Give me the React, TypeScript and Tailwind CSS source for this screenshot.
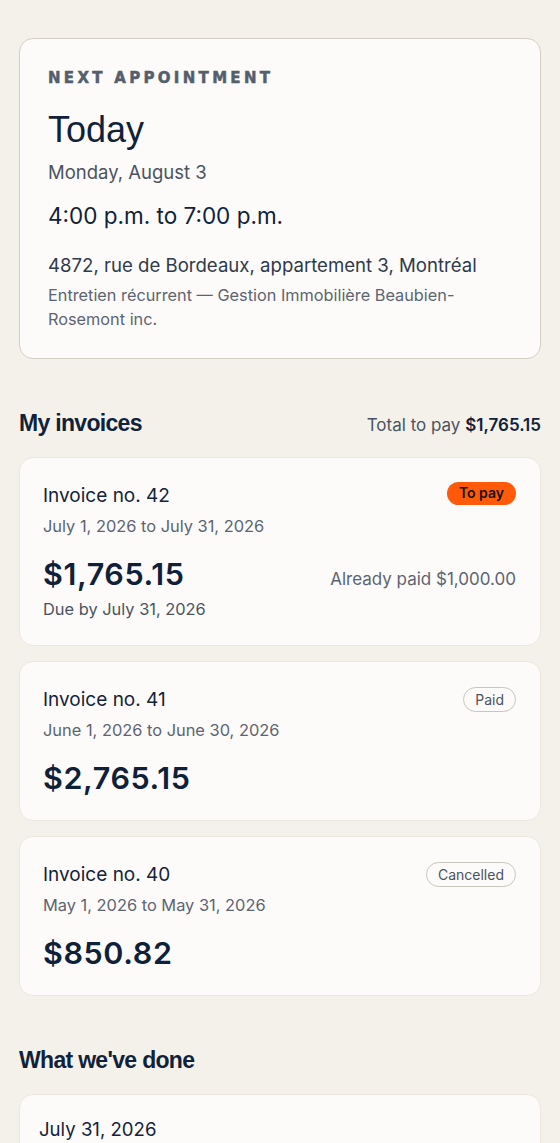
import React from "react";

const heading = { fontFamily: '"Liberation Sans", Arial, sans-serif' };

function Badge({ kind }: { kind: "topay" | "paid" | "cancelled" }) {
  if (kind === "topay")
    return (
      <span className="mt-[-1px] inline-flex h-[23px] items-center rounded-full bg-[#ff5a0a] px-[12px] text-[14px] font-semibold leading-none text-[#1a1208]">
        To pay
      </span>
    );
  return (
    <span className="inline-flex h-[25px] items-center rounded-full border border-[#c9c6c0] px-[11px] text-[14px] leading-none text-[#4b5361]">
      {kind === "paid" ? "Paid" : "Cancelled"}
    </span>
  );
}

function Invoice({
  no,
  range,
  amount,
  badge,
  paid,
  due,
}: {
  no: string;
  range: string;
  amount: string;
  badge: "topay" | "paid" | "cancelled";
  paid?: string;
  due?: string;
}) {
  return (
    <div className="rounded-[14px] border border-[#ebe7df] bg-[#fcfbf9] pl-[23px] pr-6 pt-[25px] pb-6">
      <div className="flex items-start justify-between">
        <div className="text-[19px] leading-[26px] text-[#14233a]">Invoice no. {no}</div>
        <Badge kind={badge} />
      </div>
      <div className="mt-[5px] text-[16.4px] leading-[24px] text-[#5d6472]">{range}</div>
      <div className="mt-[18px] flex items-baseline justify-between">
        <div className="text-[30.5px] font-semibold leading-[36px] tracking-[0.02em] text-[#0f2138]">{amount}</div>
        {paid && <div className="text-[17px] text-[#5d6472]">Already paid {paid}</div>}
      </div>
      {due && <div className="mt-[5px] text-[16.4px] leading-[24px] text-[#4b5361]">Due by {due}</div>}
    </div>
  );
}

export default function App() {
  return (
    <div
      className="min-h-[1143px] bg-[#f4f1ea] px-[19px] pt-[38px] pb-10"
      style={{ fontFamily: 'Inter, "Noto Sans", sans-serif' }}
    >
      <div className="rounded-[14px] border border-[#d3cec4] bg-[#fcfbf9] px-[28px] pt-[27px] pb-[27px]">
        <div
          className="text-[15px] font-bold uppercase leading-[24px] tracking-[0.22em] text-[#555e6c] [-webkit-text-stroke:0.5px_#555e6c]"
          style={{ fontFamily: '"DejaVu Sans", "Liberation Sans", sans-serif' }}
        >
          Next appointment
        </div>
        <div className="mt-[19px] text-[36px] leading-[42px] text-[#10223a]" style={heading}>
          Today
        </div>
        <div className="mt-[7px] text-[18.5px] leading-[28px] text-[#4b5361]">Monday, August 3</div>
        <div className="mt-[14px] text-[22.5px] leading-[32px] text-[#10223a]">4:00 p.m. to 7:00 p.m.</div>
        <div className="mt-[19px] text-[18.6px] leading-[28px] text-[#2f3a4b]">
          4872, rue de Bordeaux, appartement 3, Montréal
        </div>
        <div className="mt-[4px] pr-12 text-[16.3px] leading-[24px] text-[#5d6472]">
          Entretien récurrent — Gestion Immobilière Beaubien-Rosemont inc.
        </div>
      </div>

      <div className="mt-[50px] flex items-baseline justify-between">
        <h2 className="text-[23px] font-bold leading-[28px] tracking-[-0.03em] text-[#10223a]" style={heading}>
          My invoices
        </h2>
        <div className="text-[17px] text-[#4b5361]">
          Total to pay <span className="font-semibold text-[#10223a]">$1,765.15</span>
        </div>
      </div>

      <div className="mt-[18px] flex flex-col gap-[15px]">
        <Invoice
          no="42"
          range="July 1, 2026 to July 31, 2026"
          amount="$1,765.15"
          badge="topay"
          paid="$1,000.00"
          due="July 31, 2026"
        />
        <Invoice no="41" range="June 1, 2026 to June 30, 2026" amount="$2,765.15" badge="paid" />
        <Invoice no="40" range="May 1, 2026 to May 31, 2026" amount="$850.82" badge="cancelled" />
      </div>

      <h2
        className="mt-[50px] text-[23px] font-bold leading-[28px] tracking-[-0.03em] text-[#10223a]"
        style={heading}
      >
        What we've done
      </h2>

      <div className="mt-[20px] rounded-[14px] border border-[#ebe7df] bg-[#fcfbf9] pl-[19px] pr-5 pt-[21px] pb-6">
        <div className="text-[18.6px] leading-[26px] text-[#14233a]">July 31, 2026</div>
        <div className="mt-2 text-[16px] leading-[24px] text-[#5d6472]">Entretien récurrent</div>
      </div>
    </div>
  );
}
